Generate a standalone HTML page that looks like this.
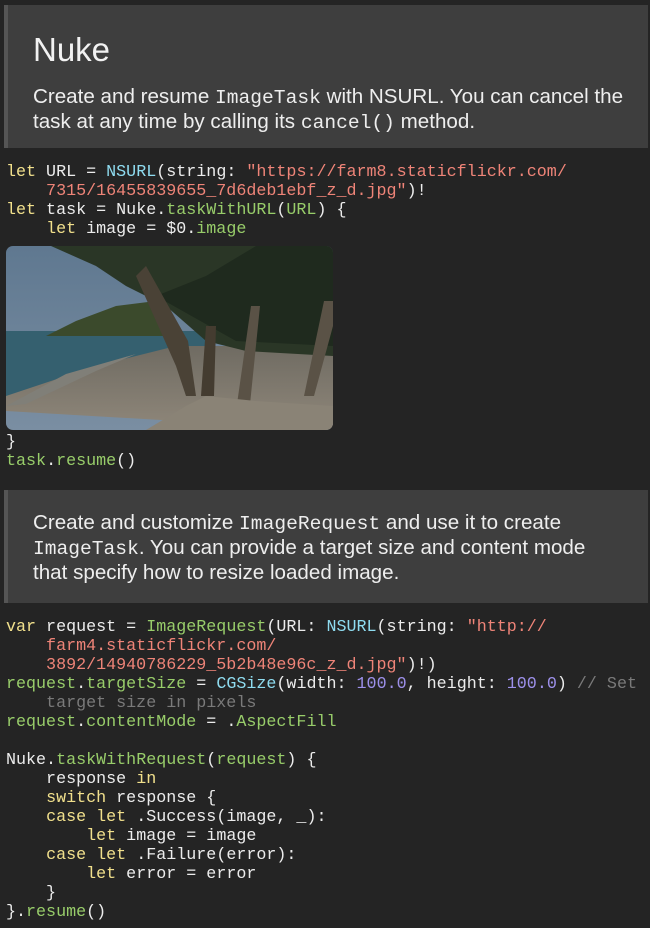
<!DOCTYPE html>
<html><head><meta charset="utf-8"><style>
html,body{margin:0;padding:0;background:#242424;width:650px;height:928px;overflow:hidden}
.blk{position:absolute;left:4px;width:640px;background:#3e3e3e;border-left:4px solid #555;font-family:"Liberation Sans",sans-serif;color:#eee}
.blk p{margin:0;position:absolute;left:25px;font-size:20.6px;line-height:24px}
.m{font-family:"Liberation Mono",monospace;font-size:19.6px}
pre{position:absolute;left:6px;margin:0;font-family:"Liberation Mono",monospace;font-size:16.7px;line-height:19px;color:#ececec;white-space:pre}
.k{color:#f1e08c}.g{color:#98cd6a}.c{color:#8fdcf0}.s{color:#ef8478}.n{color:#9d90ea}.cm{color:#7a7a7a}
</style></head><body>
<div class="blk" style="top:5px;height:143px">
<div style="position:absolute;left:25px;top:26px;font-size:33px;color:#f2f2f2">Nuke</div>
<p style="top:80px;width:600px">Create and resume <span class="m">ImageTask</span> with NSURL. You can cancel the task at any time by calling its <span class="m">cancel()</span> method.</p>
</div>
<pre style="top:163px"><span class="k">let</span> URL = <span class="c">NSURL</span>(string: <span class="s">"https://farm8.staticflickr.com/
    7315/16455839655_7d6deb1ebf_z_d.jpg"</span>)!
<span class="k">let</span> task = Nuke.<span class="g">taskWithURL</span>(<span class="g">URL</span>) {
    <span class="k">let</span> image = $0.<span class="g">image</span></pre>
<svg style="position:absolute;left:6px;top:246px" width="327" height="184" viewBox="0 0 327 184">
<defs><clipPath id="r"><rect width="327" height="184" rx="7"/></clipPath>
<linearGradient id="sky" x1="0" y1="0" x2="0" y2="1"><stop offset="0" stop-color="#5f7890"/><stop offset="1" stop-color="#7a8ea2"/></linearGradient>
<linearGradient id="sand" x1="0" y1="0" x2="0" y2="1"><stop offset="0" stop-color="#6f6b62"/><stop offset="1" stop-color="#8f877a"/></linearGradient></defs>
<g clip-path="url(#r)">
<rect width="327" height="184" fill="url(#sky)"/>
<rect y="85" width="200" height="70" fill="#35606f"/>
<polygon points="40,90 70,75 110,60 150,55 160,90" fill="#3b4a2c"/>
<polygon points="0,165 0,150 90,120 170,100 327,100 327,184" fill="url(#sand)"/>
<polygon points="0,160 60,128 130,108 90,125 20,158" fill="#807f78"/>
<polygon points="45,0 327,0 327,110 240,105 200,95 160,60 120,40 90,20" fill="#2a3626"/>
<polygon points="150,50 200,30 250,0 327,0 327,100 230,95" fill="#1f2a1e"/>
<polygon points="130,30 170,120 180,150 190,150 182,95 140,20" fill="#4a4236"/>
<polygon points="230,165 245,60 254,60 243,168" fill="#5a5246"/>
<polygon points="298,150 318,55 327,55 327,80 308,150" fill="#5a5246"/>
<polygon points="195,150 200,80 210,80 208,150" fill="#443c30"/>
<polygon points="180,160 200,150 250,155 327,160 327,184 140,184" fill="#8a8376"/>
</g></svg>
<pre style="top:433px">}
<span class="g">task</span>.<span class="g">resume</span>()</pre>
<div class="blk" style="top:490px;height:113px">
<p style="top:21px;width:585px">Create and customize <span class="m">ImageRequest</span> and use it to create <span class="m">ImageTask</span>. You can provide a target size and content mode that specify how to resize loaded image.</p>
</div>
<pre style="top:618px"><span class="k">var</span> request = <span class="g">ImageRequest</span>(URL: <span class="c">NSURL</span>(string: <span class="s">"http://
    farm4.staticflickr.com/
    3892/14940786229_5b2b48e96c_z_d.jpg"</span>)!)
<span class="g">request</span>.<span class="g">targetSize</span> = <span class="c">CGSize</span>(width: <span class="n">100.0</span>, height: <span class="n">100.0</span>) <span class="cm">// Set
    target size in pixels</span>
<span class="g">request</span>.<span class="g">contentMode</span> = .<span class="g">AspectFill</span>

Nuke.<span class="g">taskWithRequest</span>(<span class="g">request</span>) {
    response <span class="k">in</span>
    <span class="k">switch</span> response {
    <span class="k">case let</span> .Success(image, _):
        <span class="k">let</span> image = image
    <span class="k">case let</span> .Failure(error):
        <span class="k">let</span> error = error
    }
}.<span class="g">resume</span>()</pre>
</body></html>
